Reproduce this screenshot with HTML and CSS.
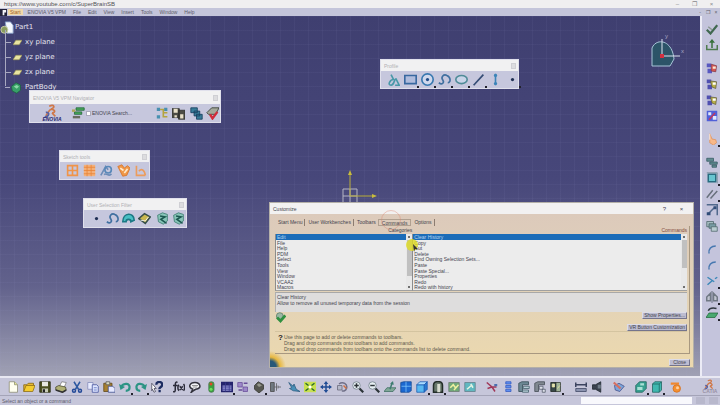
FILE: index.html
```
<!DOCTYPE html>
<html lang="en">
<head>
    <meta charset="UTF-8">
    <meta name="viewport" content="width=device-width, initial-scale=1.0">
    <title>Part1</title>
    <link rel="stylesheet" href="styles.css">
</head>
<body>

    <!-- icon set -->
    <svg class="sprite" aria-hidden="true">
        <symbol id="i-new" viewBox="0 0 16 16"><path d="M3 1h7l4 4v10H3z" fill="#fffff0" stroke="#8a8a70"/><path d="M10 1v4h4" fill="#e8e890" stroke="#8a8a70"/></symbol>
        <symbol id="i-open" viewBox="0 0 16 16"><path d="M1 14V5h4l2-2h7v3" fill="#e8b830" stroke="#80600c"/><path d="M1 14l3-8h12l-3 8z" fill="#f4cc30" stroke="#8a6a10"/></symbol>
        <symbol id="i-save" viewBox="0 0 16 16"><path d="M1 1h14v14H1z" fill="#4c5020" stroke="#22240c"/><path d="M4 1h8v6H4z" fill="#e8e8e0"/><path d="M4 10h8v5H4z" fill="#c8ccb8"/><path d="M5 11h3v4H5z" fill="#222"/></symbol>
        <symbol id="i-print" viewBox="0 0 16 16"><path d="M6 7l3-6 6 1-3 7z" fill="#fff" stroke="#777"/><path d="M1 8l4-2 9 2 1 4-5 3-9-3z" fill="#b0b074" stroke="#44442c"/><path d="M1 12l9 3 5-3" fill="none" stroke="#333" stroke-width="2"/></symbol>
        <symbol id="i-cut" viewBox="0 0 16 16"><path d="M4 1l6 10M12 1L6 11" stroke="#2c58a0" stroke-width="2" fill="none"/><circle cx="4" cy="13" r="2" fill="none" stroke="#234a98" stroke-width="2"/><circle cx="12" cy="13" r="2" fill="none" stroke="#234a98" stroke-width="2"/></symbol>
        <symbol id="i-copy" viewBox="0 0 16 16"><path d="M1 2h7v9H1z" fill="#e8ecff" stroke="#8088b8"/><path d="M7 5h6l2 2v8H7z" fill="#dfe6ff" stroke="#3c4c98"/><path d="M9 9h4M9 12h4" stroke="#5068b8"/></symbol>
        <symbol id="i-paste" viewBox="0 0 16 16"><path d="M1 3h11v11H1z" fill="#a88030" stroke="#5c4414"/><path d="M4 1h5v4H4z" fill="#d8d8c0" stroke="#555"/><path d="M7 7h6l3 3v5H7z" fill="#e6e9ff" stroke="#384888"/></symbol>
        <symbol id="i-undo" viewBox="0 0 16 16"><path d="M3 7c4-5 12-4 11 2 0 3-3 4-5 4" fill="none" stroke="#2c9484" stroke-width="3"/><path d="M0 4l2 8 6-4z" fill="#2c9484"/></symbol>
        <symbol id="i-redo" viewBox="0 0 16 16"><path d="M13 7C9 2 1 3 2 9c0 3 3 4 5 4" fill="none" stroke="#2c9484" stroke-width="3"/><path d="M16 4l-2 8-6-4z" fill="#2c9484"/></symbol>
        <symbol id="i-what" viewBox="0 0 16 16"><path d="M1 3l6 7H4l2 4-2 1-2-4-1 2z" fill="#fff" stroke="#445"/><path d="M7 5c0-5 8-5 8 0 0 3-4 3-4 6" fill="none" stroke="#1c2c60" stroke-width="3"/><path d="M10 12h3v3h-3z" fill="#1c2c60"/></symbol>
        <symbol id="i-fx" viewBox="0 0 16 16"><path d="M6 2C3 0 3 4 3 7v5c0 2-1 3-3 2M0 6h6M8 5c-2 2-2 6 0 8M9 7l4 5M13 7l-4 5M14 4c2 2 2 7 0 9" fill="none" stroke="#2a2a38" stroke-width="2"/></symbol>
        <symbol id="i-note" viewBox="0 0 16 16"><path d="M3 15l2-4C-2 8 1 2 8 2s10 8 1 9c-2 1-4 3-6 4z" fill="#f4f4f8" stroke="#33333d" stroke-width="2"/><path d="M4 6h8M5 8h6" stroke="#777"/></symbol>
        <symbol id="i-light" viewBox="0 0 16 16"><rect x="5" y="1" width="7" height="14" rx="3" fill="#38a040" stroke="#4c7850"/><circle cx="8" cy="4" r="2" fill="#e04828"/><circle cx="8" cy="11" r="2" fill="#70e060"/></symbol>
        <symbol id="i-table" viewBox="0 0 16 16"><path d="M1 2h14v12H1z" fill="#9090d0" stroke="#24246c" stroke-width="2"/><path d="M1 4h14" stroke="#24246c" stroke-width="4"/><path d="M1 8h14M1 11h14M6 2v12M11 2v12" stroke="#38388c"/></symbol>
        <symbol id="i-know" viewBox="0 0 16 16"><path d="M1 2h6v6H1zM8 8h6v6H8z" fill="#9c88c8" stroke="#684c98"/><path d="M9 3h5M2 12h5" stroke="#684c98" stroke-width="2"/></symbol>
        <symbol id="i-rock" viewBox="0 0 16 16"><path d="M2 6l5-5 7 4v6l-6 5-6-5z" fill="#55564f" stroke="#33342e"/><path d="M5 5l3-2 4 3-4 2z" fill="#94968a"/></symbol>
        <symbol id="i-tree" viewBox="0 0 16 16"><path d="M2 2h5v12H2z" fill="#707880" stroke="#444"/><path d="M7 8h3M10 3v10M12 8h4M12 6v4" stroke="#555" fill="none"/></symbol>
        <symbol id="i-fly" viewBox="0 0 16 16"><path d="M1 2l6 5 1-3 3 7 5 3-9-1-5-3 3-1z" fill="#4a90b8" stroke="#28587c"/></symbol>
        <symbol id="i-fit" viewBox="0 0 16 16"><path d="M0 1h16v14H0z" fill="#c8e050"/><path d="M2 3l4 3M14 3l-4 3M2 13l4-3M14 13l-4-3" stroke="#2c6c2c" stroke-width="2"/><circle cx="8" cy="8" r="2" fill="#fff"/></symbol>
        <symbol id="i-pan" viewBox="0 0 16 16"><path d="M8 2v12M2 8h12" stroke="#204c94" stroke-width="2"/><path d="M8 0l3 4H5zM8 16l3-4H5zM0 8l4-3v6zM16 8l-4-3v6z" fill="#204c94"/></symbol>
        <symbol id="i-rotate" viewBox="0 0 16 16"><path d="M2 6h6v6H2z" fill="#b4b8c8" stroke="#667"/><path d="M4 4c5-4 12 0 10 6-1 3-4 4-6 3" fill="none" stroke="#707088" stroke-width="2"/><path d="M10 6l4 4" stroke="#d07040" stroke-width="2"/></symbol>
        <symbol id="i-zoomin" viewBox="0 0 16 16"><circle cx="6" cy="6" r="5" fill="#e8f0f4" stroke="#6c7c84"/><path d="M10 10l5 5" stroke="#2c3438" stroke-width="3"/><path d="M6 3v6M3 6h6" stroke="#2c3438" stroke-width="2"/></symbol>
        <symbol id="i-zoomout" viewBox="0 0 16 16"><circle cx="6" cy="6" r="5" fill="#e8f0f4" stroke="#6c7c84"/><path d="M10 10l5 5" stroke="#2c3438" stroke-width="3"/><path d="M3 6h6" stroke="#2c3438" stroke-width="2"/></symbol>
        <symbol id="i-normal" viewBox="0 0 16 16"><path d="M0 14l4-5h12l-4 5z" fill="#80a898" stroke="#3c6c60"/><path d="M8 11L11 2" stroke="#3c7c70" stroke-width="2"/><path d="M8 4l4-4 1 5z" fill="#3c7c70"/></symbol>
        <symbol id="i-multi" viewBox="0 0 16 16"><path d="M1 2l4-1h10v12l-3 2H1z" fill="#1c68d0" stroke="#134890"/><path d="M2 7h13M8 1v14" stroke="#80c8ff"/></symbol>
        <symbol id="i-cube" viewBox="0 0 16 16"><path d="M1 5h10v10H1z" fill="#58b8f0" stroke="#1858b0"/><path d="M1 5l4-4h10l-4 4z" fill="#a8dcff" stroke="#1858b0"/><path d="M11 5l4-4v10l-4 4z" fill="#2878d0" stroke="#1858b0"/></symbol>
        <symbol id="i-shade" viewBox="0 0 16 16"><path d="M2 15V6c0-7 12-7 12 0v9z" fill="#68786c" stroke="#222c28" stroke-width="2"/><path d="M7 4h4v11H7z" fill="#d8dcd0"/></symbol>
        <symbol id="i-hide" viewBox="0 0 16 16"><path d="M1 2h14v12H1z" fill="#70a878" stroke="#6c7870"/><path d="M3 9l4-4 3 4M8 12l6-7" fill="none" stroke="#f0f0a0" stroke-width="2"/></symbol>
        <symbol id="i-swap" viewBox="0 0 16 16"><path d="M1 2h14v12H1z" fill="#60b8c0" stroke="#607c88"/><path d="M4 11l7-6M9 4l3 5" fill="none" stroke="#e4f4e4" stroke-width="2"/></symbol>
        <symbol id="i-axis" viewBox="0 0 16 16"><path d="M1 2l7 6-6 2M8 8h6M8 8l4 6" fill="none" stroke="#a03858" stroke-width="2"/><path d="M11 4h4v3h-4z" fill="#4c70b0"/></symbol>
        <symbol id="i-stack" viewBox="0 0 16 16"><path d="M5 1h7v3H5zM5 6h7v3H5zM5 11h7v3H5z" fill="#6090f0" stroke="#3058c0"/></symbol>
        <symbol id="i-cat" viewBox="0 0 16 16"><path d="M1 3l4-2h9v4H6v9H1z" fill="#6c8894" stroke="#304850"/><path d="M7 7h8v3H7zM6 12h8v3H6z" fill="#b4ccd4" stroke="#405c68"/></symbol>
        <symbol id="i-cat2" viewBox="0 0 16 16"><path d="M1 3l4-2h9v4H6v9H1z" fill="#808890" stroke="#404850"/><path d="M7 7h5v4H7zM11 11h4v4h-4z" fill="#dce0e8" stroke="#505868"/></symbol>
        <symbol id="i-book" viewBox="0 0 16 16"><path d="M1 2h7v12H1z" fill="#384848" stroke="#18201c"/><path d="M8 2h6v12H8z" fill="#a0b498" stroke="#303830"/><path d="M3 4h3v4H3zM10 10l3-4" fill="#e0e0c0" stroke="#eee8a0"/></symbol>
        <symbol id="i-measure" viewBox="0 0 16 16"><path d="M1 10h14v4H1z" fill="#8c94b0" stroke="#3c4460"/><path d="M1 2v6M15 2v6M2 5h12" stroke="#3c4460" stroke-width="2"/></symbol>
        <symbol id="i-inertia" viewBox="0 0 16 16"><path d="M2 5h4l7-4v14l-7-4H2z" fill="#3c4450" stroke="#1c242c"/><path d="M9 5h4v5H9z" fill="#707c88"/></symbol>
        <symbol id="i-paint" viewBox="0 0 16 16"><path d="M2 6l6-3 7 4-6 7-6-2z" fill="#7ca4d8" stroke="#404c88"/><path d="M1 2l9 8" stroke="#d87060" stroke-width="3"/></symbol>
        <symbol id="i-mat" viewBox="0 0 16 16"><path d="M1 6l5-5h9v9l-5 5H1z" fill="#38a090" stroke="#1c6058"/><path d="M3 8h7v4H3zM7 3h5v3H7z" fill="#a8e0d4"/></symbol>
        <symbol id="i-box" viewBox="0 0 16 16"><path d="M2 4l3-3h9v11l-3 3H2z" fill="#40b8b0" stroke="#1c605c"/><path d="M11 4v11M2 4h9l3-3" stroke="#1c605c" fill="none"/></symbol>
        <symbol id="i-scene" viewBox="0 0 16 16"><path d="M1 2h11v3H1z" fill="#f08830"/><circle cx="9" cy="10" r="5" fill="#f49030" stroke="#d46c18"/><circle cx="10" cy="9" r="2" fill="#ffd0a0"/></symbol>
        <symbol id="i-ds" viewBox="0 0 32 32"><path d="M11 4c9-4 11 2 4 5M14 9c-4 3-6 8-9 12M14 9c8 1 9 6 2 7M16 16l6 6" fill="none" stroke="#d07848" stroke-width="3"/><path d="M5 15c8-1 6 8-2 8" fill="none" stroke="#5860a0" stroke-width="3"/></symbol>

        <symbol id="i-exit" viewBox="0 0 16 16"><path d="M1 9l5 5 9-11" fill="none" stroke="#406850" stroke-width="3"/><path d="M3 5l5 4" stroke="#8a9890" stroke-width="2"/></symbol>
        <symbol id="i-up" viewBox="0 0 16 16"><path d="M1 8v6h14V8" fill="none" stroke="#507c50" stroke-width="2"/><path d="M8 12V4" stroke="#38703c" stroke-width="2"/><path d="M8 0l4 5H4z" fill="#38703c"/></symbol>
        <symbol id="i-cons" viewBox="0 0 16 16"><path d="M1 2h6v5H1zM2 9h6v6H2z" fill="#5858c0"/><path d="M7 3l7 2-1 8-6-1z" fill="#d85850" stroke="#803848"/><path d="M9 6h4v3H9z" fill="#f8e8d8"/></symbol>
        <symbol id="i-cons2" viewBox="0 0 16 16"><path d="M1 2h6v5H1zM2 9h6v6H2z" fill="#5050b0"/><path d="M6 4l8 1-1 9-5-2z" fill="#b8b048" stroke="#605c38"/><path d="M9 6h4v3H9z" fill="#fff"/></symbol>
        <symbol id="i-cons3" viewBox="0 0 16 16"><path d="M1 1h14v14H1z" fill="#5060d8"/><path d="M3 3h4v4H3zM9 8h5v5H9z" fill="#e0e8ff"/><path d="M4 13l8-9" stroke="#c03860" stroke-width="2"/></symbol>
        <symbol id="i-hand" viewBox="0 0 16 16"><path d="M5 1l3 7 5 1 1 4-4 3-5-3z" fill="#f8b888" stroke="#e09058"/><path d="M5 1v8" stroke="#fff"/></symbol>
        <symbol id="i-corner" viewBox="0 0 16 16"><path d="M1 3h9v4H1zM5 8h10v3H5zM8 12h6v3H8z" fill="#608c90" stroke="#345860"/></symbol>
        <symbol id="i-square" viewBox="0 0 16 16"><path d="M3 3h10v10H3z" fill="#68c4d0" stroke="#286c80" stroke-width="2"/><path d="M1 1h14v14" fill="none" stroke="#6c8890"/></symbol>
        <symbol id="i-par" viewBox="0 0 16 16"><path d="M1 13L9 3M6 14l9-10" stroke="#68707c" stroke-width="2"/></symbol>
        <symbol id="i-chamfer" viewBox="0 0 16 16"><path d="M1 1h14v14M2 14l9-9" fill="none" stroke="#50688c" stroke-width="2"/><path d="M1 11h5v4H1zM10 3h4v4h-4z" fill="#304c78"/></symbol>
        <symbol id="i-layers" viewBox="0 0 16 16"><path d="M1 2h9v7H1z" fill="#a4bcc0" stroke="#4c6468"/><path d="M4 5h9v6H4z" fill="#789ca4" stroke="#4c6468"/><path d="M7 9h8v6H7z" fill="#b8ccd0" stroke="#4c6468"/></symbol>
        <symbol id="i-arc" viewBox="0 0 16 16"><path d="M4 14c-1-6 3-10 9-10" fill="none" stroke="#4878b0" stroke-width="2"/></symbol>
        <symbol id="i-trim" viewBox="0 0 16 16"><path d="M2 3l9 6M2 13l7-6M12 5l3-2" fill="none" stroke="#3c88b8" stroke-width="2"/></symbol>
        <symbol id="i-mirror" viewBox="0 0 16 16"><path d="M8 0v16" stroke="#505c6c"/><path d="M6 3L1 8v5h5zM10 3l5 5v5h-5z" fill="#c0c4d0" stroke="#707884" stroke-width="2"/></symbol>
        <symbol id="i-project" viewBox="0 0 16 16"><path d="M3 5c2-4 7-4 11-3" fill="none" stroke="#303840" stroke-width="2"/><path d="M0 14l4-6h12l-4 6z" fill="#48a870" stroke="#20683c"/></symbol>

        <symbol id="i-profile" viewBox="0 0 16 16"><path d="M5 2l3 6c-4 0-8 7-3 7 4 0 4-8 6-8l4 8h-5" fill="none" stroke="#4898a8" stroke-width="2"/></symbol>
        <symbol id="i-rect" viewBox="0 0 16 16"><path d="M1 3h14v10H1z" fill="#b0bcdc" stroke="#3868a0" stroke-width="2"/></symbol>
        <symbol id="i-circle" viewBox="0 0 16 16"><circle cx="8" cy="8" r="7" fill="#d0d8ec" stroke="#3878b0" stroke-width="2"/><circle cx="8" cy="8" r="2" fill="#204c88"/></symbol>
        <symbol id="i-spline" viewBox="0 0 16 16"><path d="M1 12c4 3 7 0 5-3-3-4 1-8 5-6 5 2 5 9 1 9" fill="none" stroke="#4070a0" stroke-width="2"/></symbol>
        <symbol id="i-ellipse" viewBox="0 0 16 16"><ellipse cx="8" cy="8" rx="7" ry="5" fill="#c8d4e8" stroke="#508c98" stroke-width="2"/></symbol>
        <symbol id="i-line" viewBox="0 0 16 16"><path d="M2 15L14 2" stroke="#344c74" stroke-width="2"/></symbol>
        <symbol id="i-axisline" viewBox="0 0 16 16"><path d="M8 1v14" stroke="#3c84b8" stroke-width="2"/><circle cx="8" cy="3" r="2" fill="#3c84b8"/><circle cx="8" cy="13" r="2" fill="#3c84b8"/></symbol>
        <symbol id="i-point" viewBox="0 0 16 16"><circle cx="8" cy="8" r="2" fill="#203054"/></symbol>
        <symbol id="i-grid" viewBox="0 0 16 16"><path d="M2 1v14M8 1v14M14 1v14M1 2h14M1 8h14M1 14h14" stroke="#f09448" stroke-width="2"/></symbol>
        <symbol id="i-snap" viewBox="0 0 16 16"><path d="M1 1h14v14H1z" fill="#f4b078"/><path d="M1 4h14M1 8h14M1 12h14M5 1v14M10 1v14" stroke="#e88438"/></symbol>
        <symbol id="i-constr" viewBox="0 0 16 16"><path d="M1 14L7 3l3 4" fill="none" stroke="#6c8cb8" stroke-width="2"/><circle cx="10" cy="7" r="4" fill="none" stroke="#5888b8" stroke-width="2"/><path d="M5 13c3-3 6 4 9-1" fill="none" stroke="#6c8cb8" stroke-width="2"/></symbol>
        <symbol id="i-geo" viewBox="0 0 16 16"><path d="M1 3l5-2 3 4 4-3 3 3-4 9-5 1z" fill="#f09848" stroke="#d87428"/><path d="M4 5l4 3M9 11l4-5" stroke="#ffe8c8" stroke-width="2"/></symbol>
        <symbol id="i-dim" viewBox="0 0 16 16"><path d="M3 2v12h11M6 9c3-4 7-2 8 5" fill="none" stroke="#ec9c5c" stroke-width="2"/></symbol>
        <symbol id="i-surf" viewBox="0 0 16 16"><path d="M1 12C1 0 15 0 15 10l-4 2c0-4-6-4-6 0z" fill="#48c0c4" stroke="#1c7884" stroke-width="2"/></symbol>
        <symbol id="i-vol" viewBox="0 0 16 16"><path d="M1 8l7-6 7 4-6 8z" fill="#c8b850" stroke="#38504c" stroke-width="2"/><path d="M3 10l6 1 4-5" stroke="#fff" fill="none"/></symbol>
        <symbol id="i-sel" viewBox="0 0 16 16"><path d="M2 4l6-3 6 2v8l-5 4-6-3z" fill="#88c4b8" stroke="#3c7c70"/><path d="M5 5l6 1-5 3 7 5" fill="none" stroke="#1c5850" stroke-width="2"/></symbol>
        <symbol id="i-server" viewBox="0 0 16 16"><path d="M5 1h10v3H5zM3 6h9v3H3z" fill="#48a858" stroke="#24683c"/><path d="M1 11h9v3H1z" fill="#686c60"/><path d="M0 3h4v3H0z" fill="#b0a858"/></symbol>
        <symbol id="i-search" viewBox="0 0 16 16"><path d="M1 1h4v4H1zM1 10h4v4H1zM10 1h4v4h-4z" fill="#4890b0"/><path d="M5 3h4v9h5M9 7h5" fill="none" stroke="#b4a440" stroke-width="2"/></symbol>
        <symbol id="i-disks" viewBox="0 0 16 16"><path d="M0 2h9v11H0zM8 4h8v11H8z" fill="#4c4c44" stroke="#30302c"/><path d="M2 2h5v5H2zM10 9h4v5h-4zM3 10h3v3H3z" fill="#e8e0c8"/></symbol>
        <symbol id="i-shift" viewBox="0 0 16 16"><path d="M1 1h8v6H1zM5 5h7v6H5zM8 9h7v6H8z" fill="#387c98" stroke="#143c5c"/></symbol>
        <symbol id="i-valid" viewBox="0 0 16 16"><path d="M1 7l6-6h9l-4 8H3z" fill="#a4a89c" stroke="#30382c"/><path d="M5 9l3 5 6-8" fill="none" stroke="#d02c3c" stroke-width="3"/></symbol>
        <symbol id="i-eraser" viewBox="0 0 16 16"><circle cx="7" cy="6" r="5" fill="#9cb8a4" stroke="#507060"/><path d="M3 8l5 5 7-8" fill="none" stroke="#309040" stroke-width="4"/></symbol>
        <symbol id="i-plane" viewBox="0 0 16 16"><path d="M0 12l5-8h11l-5 8z" fill="#e8e4a0" stroke="#98904c"/></symbol>
    </svg>

    <header>
        <div class="titlebar">
            <a href="https://www.youtube.com/c/SuperBrainSB">https://www.youtube.com/c/SuperBrainSB</a>
            <div class="win-buttons">
                <button aria-label="Minimize">–</button>
                <button aria-label="Restore">❐</button>
                <button aria-label="Close">×</button>
            </div>
        </div>
        <nav class="menubar">
            <svg class="app-icon" viewBox="0 0 8 8"><path d="M0 0h8v8H0z" fill="#22223a"/><path d="M3 1h4v3H5v3H3z" fill="#f4f4fa"/></svg>
            <button class="start">Start</button>
            <button>ENOVIA V5 VPM</button>
            <button>File</button>
            <button>Edit</button>
            <button>View</button>
            <button>Insert</button>
            <button>Tools</button>
            <button>Window</button>
            <button>Help</button>
            <div class="doc-buttons">
                <button aria-label="Minimize document">-</button>
                <button aria-label="Restore document">❐</button>
                <button aria-label="Close document">×</button>
            </div>
        </nav>
    </header>

    <main>
        <section class="canvas">
            <ul class="tree">
                <li class="root"><svg viewBox="0 0 16 16"><path d="M6 1h6l3 4v9H8z" fill="#f4f8ff" stroke="#88a0c8"/><circle cx="5" cy="10" r="4" fill="#8a9c60" stroke="#d0d4b0"/></svg>Part1</li>
                <li><svg><use href="#i-plane"/></svg>xy plane</li>
                <li><svg><use href="#i-plane"/></svg>yz plane</li>
                <li><svg><use href="#i-plane"/></svg>zx plane</li>
                <li class="body"><svg viewBox="0 0 16 16"><path d="M2 6l6-5 6 3v7l-5 4-6-3z" fill="#38a068" stroke="#1c6040"/><path d="M5 6l4-2 3 2-3 3z" fill="#8cd8a8"/></svg>PartBody</li>
            </ul>

            <svg class="compass" viewBox="0 0 44 40">
                <path d="M5 34V16c4-10 20-9 22 11l-4 7z" fill="#2c5468" stroke="#a8c4d8"/>
                <path d="M15 7v17h18" fill="none" stroke="#dce4f0"/>
                <path d="M13 22h4v4h-4z" fill="#d03040"/>
                <text x="18" y="6">y</text>
                <text x="34" y="21">x</text>
            </svg>

            <svg class="origin" viewBox="0 0 40 36">
                <path d="M3 20h14v14H3zM3 27h14M10 20v14" fill="none" stroke="#b4b4c4"/>
                <path d="M10 27V5M10 27h22" fill="none" stroke="#b8ac38"/>
                <path d="M10 1l2 5H8zM37 27l-5-2v4z" fill="#c8bc3c"/>
            </svg>

            <div class="palette profile">
                <div class="palette-title">Profile<button aria-label="Close"></button></div>
                <div class="palette-tools">
                    <button class="tool" aria-label="Profile"><svg><use href="#i-profile"/></svg></button>
                    <button class="tool more" aria-label="Rectangle"><svg><use href="#i-rect"/></svg></button>
                    <button class="tool more" aria-label="Circle"><svg><use href="#i-circle"/></svg></button>
                    <button class="tool more" aria-label="Spline"><svg><use href="#i-spline"/></svg></button>
                    <button class="tool more" aria-label="Ellipse"><svg><use href="#i-ellipse"/></svg></button>
                    <button class="tool more" aria-label="Line"><svg><use href="#i-line"/></svg></button>
                    <button class="tool" aria-label="Axis"><svg><use href="#i-axisline"/></svg></button>
                    <button class="tool more" aria-label="Point"><svg><use href="#i-point"/></svg></button>
                </div>
            </div>

            <div class="palette navigator">
                <div class="palette-title">ENOVIA V5 VPM Navigator<button aria-label="Close"></button></div>
                <div class="palette-tools">
                    <button class="enovia"><svg><use href="#i-ds"/></svg><b>ENOVIA</b></button>
                    <button class="tool" aria-label="Connect"><svg><use href="#i-server"/></svg></button>
                    <label class="search"><input type="checkbox">ENOVIA Search...</label>
                    <button class="tool" aria-label="Search"><svg><use href="#i-search"/></svg></button>
                    <button class="tool" aria-label="Save"><svg><use href="#i-disks"/></svg></button>
                    <button class="tool apart" aria-label="Propagate"><svg><use href="#i-shift"/></svg></button>
                    <button class="tool" aria-label="Validate"><svg><use href="#i-valid"/></svg></button>
                </div>
            </div>

            <div class="palette sketch">
                <div class="palette-title">Sketch tools<button aria-label="Close"></button></div>
                <div class="palette-tools">
                    <button class="tool" aria-label="Grid"><svg><use href="#i-grid"/></svg></button>
                    <button class="tool" aria-label="Snap to Point"><svg><use href="#i-snap"/></svg></button>
                    <button class="tool" aria-label="Construction"><svg><use href="#i-constr"/></svg></button>
                    <button class="tool" aria-label="Geometrical Constraints"><svg><use href="#i-geo"/></svg></button>
                    <button class="tool" aria-label="Dimensional Constraints"><svg><use href="#i-dim"/></svg></button>
                </div>
            </div>

            <div class="palette filter">
                <div class="palette-title">User Selection Filter<button aria-label="Close"></button></div>
                <div class="palette-tools">
                    <button class="tool" aria-label="Point filter"><svg><use href="#i-point"/></svg></button>
                    <button class="tool" aria-label="Curve filter"><svg><use href="#i-spline"/></svg></button>
                    <button class="tool" aria-label="Surface filter"><svg><use href="#i-surf"/></svg></button>
                    <button class="tool" aria-label="Volume filter"><svg><use href="#i-vol"/></svg></button>
                    <button class="tool apart" aria-label="Feature filter"><svg><use href="#i-sel"/></svg></button>
                    <button class="tool" aria-label="Geometry filter"><svg><use href="#i-sel"/></svg></button>
                </div>
            </div>

            <div class="dialog" role="dialog" aria-label="Customize">
                <div class="dialog-title">
                    <span>Customize</span>
                    <button aria-label="Help">?</button>
                    <button aria-label="Close">×</button>
                </div>
                <div class="dialog-body">
                    <div class="tabs">
                        <button>Start Menu</button>
                        <button>User Workbenches</button>
                        <button class="last">Toolbars</button>
                        <button class="active">Commands</button>
                        <button>Options</button>
                    </div>
                    <div class="page">
                        <div class="lists">
                            <div class="list-col">
                                <h3 id="cat">Categories</h3>
                                <div class="list">
                                    <ul role="listbox" aria-labelledby="cat">
                                        <li class="selected" role="option">Edit</li>
                                        <li role="option">File</li>
                                        <li role="option">Help</li>
                                        <li role="option">PDM</li>
                                        <li role="option">Select</li>
                                        <li role="option">Tools</li>
                                        <li role="option">View</li>
                                        <li role="option">Window</li>
                                        <li role="option">VCAA2</li>
                                        <li role="option">Macros</li>
                                    </ul>
                                    <div class="scroll tall"><i></i></div>
                                </div>
                            </div>
                            <div class="list-col wide">
                                <h3 id="com">Commands</h3>
                                <div class="list">
                                    <ul role="listbox" aria-labelledby="com">
                                        <li class="selected" role="option">Clear History</li>
                                        <li role="option">Copy</li>
                                        <li role="option">Cut</li>
                                        <li role="option">Delete</li>
                                        <li role="option">Find Owning Selection Sets...</li>
                                        <li role="option">Paste</li>
                                        <li role="option">Paste Special...</li>
                                        <li role="option">Properties</li>
                                        <li role="option">Redo</li>
                                        <li role="option">Redo with history</li>
                                    </ul>
                                    <div class="scroll"><i></i></div>
                                </div>
                            </div>
                        </div>
                        <div class="description">
                            <p>Clear History</p>
                            <p>Allow to remove all unused temporary data from the session</p>
                        </div>
                        <div class="actions">
                            <svg class="command-icon"><use href="#i-eraser"/></svg>
                            <div class="action-buttons">
                                <button class="push">Show Properties...</button>
                                <button class="push">VR Button Customization</button>
                            </div>
                        </div>
                        <div class="hint">
                            <b>?</b>
                            <div>
                                <p>Use this page to add or delete commands to toolbars.</p>
                                <p>Drag and drop commands onto toolbars to add commands.</p>
                                <p>Drag and drop commands from toolbars onto the commands list to delete command.</p>
                            </div>
                        </div>
                    </div>
                    <div class="dialog-footer">
                        <button class="push">Close</button>
                    </div>
                </div>
                <div class="click-ring"></div>
                <svg class="cursor" viewBox="0 0 14 14"><circle cx="7" cy="7" r="6" fill="#e0dc20" opacity=".8"/><path d="M8 6l5 5-3 0-1 3z" fill="#333"/></svg>
            </div>
        </section>

        <aside class="sidebar">
            <div class="group">
                <button class="tool" aria-label="Sketcher"><svg><use href="#i-exit"/></svg></button>
                <button class="tool" aria-label="Exit workbench"><svg><use href="#i-up"/></svg></button>
            </div>
            <div class="group">
                <button class="tool" aria-label="Constraint dialog"><svg><use href="#i-cons"/></svg></button>
                <button class="tool" aria-label="Constraint"><svg><use href="#i-cons2"/></svg></button>
                <button class="tool" aria-label="Fix together"><svg><use href="#i-cons2"/></svg></button>
                <button class="tool" aria-label="Animate"><svg><use href="#i-cons3"/></svg></button>
            </div>
            <div class="group">
                <button class="tool more" aria-label="Select"><svg><use href="#i-hand"/></svg></button>
            </div>
            <div class="group">
                <button class="tool" aria-label="Visualization"><svg><use href="#i-corner"/></svg></button>
                <button class="tool more" aria-label="Cut part"><svg><use href="#i-square"/></svg></button>
                <button class="tool more" aria-label="Parallel"><svg><use href="#i-par"/></svg></button>
                <button class="tool" aria-label="Constraint edit"><svg><use href="#i-chamfer"/></svg></button>
                <button class="tool" aria-label="Offset"><svg><use href="#i-layers"/></svg></button>
            </div>
            <div class="group">
                <button class="tool" aria-label="Corner"><svg><use href="#i-arc"/></svg></button>
                <button class="tool" aria-label="Chamfer"><svg><use href="#i-arc"/></svg></button>
                <button class="tool more" aria-label="Trim"><svg><use href="#i-trim"/></svg></button>
                <button class="tool more" aria-label="Mirror"><svg><use href="#i-mirror"/></svg></button>
                <button class="tool more" aria-label="Project"><svg><use href="#i-project"/></svg></button>
            </div>
        </aside>
    </main>

    <footer>
        <div class="toolbar">
            <div class="group">
                <button class="tool" aria-label="New"><svg><use href="#i-new"/></svg></button>
                <button class="tool" aria-label="Open"><svg><use href="#i-open"/></svg></button>
                <button class="tool" aria-label="Save"><svg><use href="#i-save"/></svg></button>
                <button class="tool" aria-label="Print"><svg><use href="#i-print"/></svg></button>
                <button class="tool" aria-label="Cut"><svg><use href="#i-cut"/></svg></button>
                <button class="tool" aria-label="Copy"><svg><use href="#i-copy"/></svg></button>
                <button class="tool" aria-label="Paste"><svg><use href="#i-paste"/></svg></button>
                <button class="tool more" aria-label="Undo"><svg><use href="#i-undo"/></svg></button>
                <button class="tool more" aria-label="Redo"><svg><use href="#i-redo"/></svg></button>
                <button class="tool" aria-label="What's this"><svg><use href="#i-what"/></svg></button>
            </div>
            <div class="group">
                <button class="tool" aria-label="Formula"><svg><use href="#i-fx"/></svg></button>
                <button class="tool" aria-label="Comment"><svg><use href="#i-note"/></svg></button>
                <button class="tool" aria-label="Check"><svg><use href="#i-light"/></svg></button>
                <button class="tool more" aria-label="Design table"><svg><use href="#i-table"/></svg></button>
                <button class="tool" aria-label="Knowledge"><svg><use href="#i-know"/></svg></button>
                <button class="tool more" aria-label="Law"><svg><use href="#i-rock"/></svg></button>
                <button class="tool" aria-label="Equivalent dimensions"><svg><use href="#i-tree"/></svg></button>
            </div>
            <div class="group near">
                <button class="tool" aria-label="Fly mode"><svg><use href="#i-fly"/></svg></button>
                <button class="tool" aria-label="Fit all in"><svg><use href="#i-fit"/></svg></button>
                <button class="tool" aria-label="Pan"><svg><use href="#i-pan"/></svg></button>
                <button class="tool" aria-label="Rotate"><svg><use href="#i-rotate"/></svg></button>
                <button class="tool" aria-label="Zoom in"><svg><use href="#i-zoomin"/></svg></button>
                <button class="tool" aria-label="Zoom out"><svg><use href="#i-zoomout"/></svg></button>
                <button class="tool" aria-label="Normal view"><svg><use href="#i-normal"/></svg></button>
                <button class="tool" aria-label="Multi view"><svg><use href="#i-multi"/></svg></button>
                <button class="tool more" aria-label="Isometric view"><svg><use href="#i-cube"/></svg></button>
                <button class="tool more" aria-label="Shading"><svg><use href="#i-shade"/></svg></button>
                <button class="tool" aria-label="Hide/Show"><svg><use href="#i-hide"/></svg></button>
                <button class="tool" aria-label="Swap visible space"><svg><use href="#i-swap"/></svg></button>
            </div>
            <div class="group">
                <button class="tool" aria-label="Axis system"><svg><use href="#i-axis"/></svg></button>
                <button class="tool" aria-label="Mean dimensions"><svg><use href="#i-stack"/></svg></button>
                <button class="tool" aria-label="Catalog"><svg><use href="#i-cat"/></svg></button>
                <button class="tool" aria-label="Catalog browser"><svg><use href="#i-cat2"/></svg></button>
                <button class="tool more" aria-label="Work on support"><svg><use href="#i-book"/></svg></button>
            </div>
            <div class="group far">
                <button class="tool" aria-label="Measure between"><svg><use href="#i-measure"/></svg></button>
                <button class="tool" aria-label="Measure item"><svg><use href="#i-inertia"/></svg></button>
            </div>
            <div class="group">
                <button class="tool" aria-label="Apply material"><svg><use href="#i-paint"/></svg></button>
            </div>
            <div class="group">
                <button class="tool more" aria-label="Draft analysis"><svg><use href="#i-mat"/></svg></button>
                <button class="tool more" aria-label="Bounding box"><svg><use href="#i-box"/></svg></button>
            </div>
            <div class="group near">
                <button class="tool" aria-label="Scene"><svg><use href="#i-scene"/></svg></button>
            </div>
            <div class="brand"><svg><use href="#i-ds"/></svg><b>CATIA</b></div>
        </div>
        <div class="status">
            <label for="power">Select an object or a command</label>
            <input type="text" id="power">
            <button aria-label="Run"></button>
            <button aria-label="Options"></button>
        </div>
    </footer>

</body>
</html>
```
FILE: styles.css
```
* {
    box-sizing: border-box;
}
body {
    margin: 0;
    min-height: 100vh;
    display: flex;
    flex-direction: column;
    font-family: "Liberation Sans", Arial, sans-serif;
    font-size: 5px;
    line-height: 6px;
    color: #44444e;
    background-color: #c6c6da;
}
button {
    font: inherit;
    color: inherit;
    background: none;
    border: none;
    padding: 0;
    cursor: pointer;
}
ul, p, h3 {
    list-style: none;
    margin: 0;
    padding: 0;
}
.sprite {
    display: none;
}

/* title bar and menu */
.titlebar {
    display: flex;
    justify-content: space-between;
    align-items: center;
    height: 8px;
    padding-left: 4px;
    background-color: #f0eff0;
    font-size: 6px;
}
.titlebar a {
    color: #505056;
    text-decoration: none;
}
.win-buttons {
    display: flex;
    color: #88888c;
}
.win-buttons button {
    width: 17px;
}
.menubar {
    display: flex;
    align-items: center;
    height: 8px;
    gap: 7px;
    background-color: #c4c5da;
    color: #5c5c68;
}
.app-icon {
    width: 7px;
    height: 7px;
}
.menubar .start {
    padding: 0 2px;
    margin: 0 -2px 0 -6px;
    background-color: #f0d8a8;
    color: #a06028;
}
.doc-buttons {
    display: flex;
    margin-left: auto;
}
.doc-buttons button {
    width: 8px;
}

main {
    flex: 1;
    display: flex;
}

/* 3D view */
.canvas {
    position: relative;
    flex: 1;
    overflow: hidden;
    background-image:
        repeating-linear-gradient(90deg, rgba(170, 170, 220, 0.06) 0 1px, transparent 1px 14px),
        repeating-linear-gradient(rgba(170, 170, 220, 0.05) 0 1px, transparent 1px 14px),
        linear-gradient(#3f3f70, #47477a 45%, #62628c 75%, #a0a1b4);
}
.tree {
    position: relative;
    width: 80px;
    padding: 4px 0 0 5px;
    font-family: "DejaVu Sans", sans-serif;
    font-size: 7px;
    line-height: 15px;
    color: #e4e4ee;
}
.tree::before {
    content: "";
    position: absolute;
    left: 5px;
    top: 14px;
    width: 1px;
    height: 56px;
    background-color: #a8a8c0;
}
.tree li {
    display: flex;
    align-items: center;
    height: 15px;
}
.tree li::before {
    content: "";
    width: 6px;
    height: 1px;
    margin-right: 2px;
    background-color: #a8a8c0;
}
.tree svg {
    width: 9px;
    height: 9px;
    margin-right: 3px;
}
.tree .root::before {
    display: none;
}
.tree .root svg {
    width: 14px;
    height: 14px;
    margin: 0 1px 0 -5px;
}
.tree .body::before {
    width: 5px;
    margin-right: 0;
}
.tree .body svg {
    width: 12px;
    height: 12px;
}
.compass {
    position: absolute;
    right: 9px;
    top: 16px;
    width: 44px;
    height: 40px;
}
.compass text {
    fill: #a8a8c4;
    font-size: 6px;
}
.origin {
    position: absolute;
    left: 340px;
    top: 153px;
    width: 40px;
    height: 36px;
}

/* floating toolbars */
.palette {
    position: absolute;
    background-color: #c6c7dd;
    border: 1px solid #e0e0ec;
}
.palette-title {
    display: flex;
    justify-content: space-between;
    align-items: center;
    height: 11px;
    padding: 0 2px 0 3px;
    background-color: #f1f1f2;
    color: #b0b0b4;
}
.palette-title button {
    width: 5px;
    height: 6px;
    background-color: #dcdcdf;
    border: 1px solid #cfcfd4;
}
.palette-tools {
    display: flex;
    align-items: center;
    height: 17px;
    padding-left: 4px;
}
.palette .tool svg {
    width: 13px;
    height: 13px;
}
.profile {
    left: 380px;
    top: 43px;
    width: 139px;
}
.profile .tool, .sketch .tool {
    width: 17px;
    flex: none;
}
.navigator {
    left: 29px;
    top: 74px;
    width: 192px;
}
.navigator .palette-title {
    height: 13px;
}
.navigator .palette-tools {
    height: 18px;
}
.sketch {
    left: 59px;
    top: 134px;
    width: 91px;
}
.filter {
    left: 83px;
    top: 182px;
    width: 104px;
}
.enovia {
    display: flex;
    flex-direction: column;
    align-items: center;
    width: 36px;
    color: #24246c;
    font-style: italic;
}
.enovia svg {
    width: 18px;
    height: 18px;
    margin-bottom: -6px;
}
.search {
    display: flex;
    align-items: center;
    gap: 1px;
    margin-right: auto;
}
.search input {
    appearance: none;
    width: 5px;
    height: 5px;
    margin: 0;
    background-color: #fff;
    border: 1px solid #aaaabc;
}
.apart {
    margin-left: 2px;
}

/* tool buttons */
.tool {
    position: relative;
    display: flex;
    align-items: center;
    justify-content: center;
    width: 16px;
    height: 16px;
}
.tool svg {
    width: 12px;
    height: 12px;
}
.more::after {
    content: "";
    position: absolute;
    right: 0;
    bottom: 0;
    width: 2px;
    height: 2px;
    background-color: #22222c;
}
.sidebar {
    display: flex;
    flex-direction: column;
    gap: 7px;
    width: 20px;
    padding: 5px 1px 0 2px;
    border-left: 2px solid #ececf6;
    background-color: #c4c4dc;
}

/* customize dialog */
.dialog {
    position: absolute;
    right: 6px;
    top: 186px;
    width: 425px;
    border: 1px solid #b4b0a8;
    background-color: #e8d8b8;
}
.dialog-title {
    display: flex;
    align-items: center;
    height: 11px;
    padding: 0 3px;
    background-color: #f2f1f1;
}
.dialog-title span {
    flex: 1;
}
.dialog-title button {
    width: 17px;
    font-size: 6px;
}
.dialog-body {
    padding: 4px 3px 1px 5px;
    background:
        radial-gradient(circle at 0 100%, #285878 0 6px, #e8b840 10px, transparent 16px),
        linear-gradient(#dccabb, #e2d2b8 50%, #ecd9ae);
}
.tabs {
    display: flex;
    align-items: center;
    height: 8px;
}
.tabs button {
    height: 7px;
    padding: 0 2px 0 3px;
    border-right: 1px solid #8c7c70;
}
.tabs .last {
    border: none;
}
.tabs .active {
    padding: 0 3px;
    border: 1px solid #b0a090;
}
.page {
    padding-right: 2px;
    border-right: 1px solid #a89880;
    border-bottom: 1px solid #a89880;
}
.lists {
    display: flex;
}
.list-col {
    flex: 1;
}
.wide {
    flex: 2;
}
.list-col h3 {
    height: 8px;
    font-size: 5px;
    font-weight: normal;
    line-height: 8px;
    text-align: right;
}
.wide h3 {
    color: #804838;
}
.list {
    display: flex;
    height: 57px;
    border-left: 1px solid #8c8c8c;
    border-bottom: 1px solid #a0a0a0;
    background-color: #ececec;
}
.list ul {
    flex: 1;
    display: grid;
    grid-template-rows: repeat(10, minmax(0, 1fr));
}
.list li {
    padding-left: 1px;
}
.selected {
    background-color: #1c6cb8;
    color: #b8d4f0;
}
.scroll {
    display: flex;
    flex-direction: column;
    align-items: center;
    justify-content: space-between;
    width: 6px;
    background-color: #e8e8e8;
}
.scroll::before, .scroll::after {
    content: "";
    width: 2px;
    height: 2px;
    margin: 2px 0;
    background-color: #707070;
}
.scroll i {
    width: 5px;
    height: 28px;
    margin-bottom: auto;
    background-color: #c0c0c0;
}
.tall i {
    height: 36px;
}
.description {
    height: 20px;
    margin-top: 1px;
    padding: 1px 0 0 1px;
    background-color: #dedddd;
    border-top: 1px solid #a8a8a8;
    border-left: 1px solid #b0b0b0;
}
.actions {
    display: flex;
    justify-content: space-between;
}
.command-icon {
    width: 11px;
    height: 11px;
}
.action-buttons {
    display: flex;
    flex-direction: column;
    align-items: flex-end;
    gap: 5px;
}
.push {
    height: 7px;
    padding: 0 3px;
    line-height: 5px;
    background-color: #bcbcd0;
    border: 1px solid;
    border-color: #dcdce8 #74748c #74748c #dcdce8;
}
.action-buttons .push {
    padding: 0 1px;
}
.hint {
    display: flex;
    align-items: flex-start;
    padding: 2px 2px 1px 3px;
    border-top: 1px solid #d4c4a0;
    color: #60584c;
}
.hint b {
    width: 6px;
    font-size: 8px;
    line-height: 8px;
    color: #222;
}
.dialog-footer {
    display: flex;
    justify-content: flex-end;
    padding-top: 5px;
}
.click-ring {
    position: absolute;
    left: 111px;
    top: 7px;
    width: 20px;
    height: 20px;
    border: 1px solid rgba(220, 130, 110, 0.4);
    border-radius: 50%;
}
.cursor {
    position: absolute;
    left: 135px;
    top: 35px;
    width: 14px;
    height: 14px;
}

/* bottom toolbar and status line */
.toolbar {
    display: flex;
    align-items: center;
    gap: 6px;
    height: 20px;
    padding-left: 5px;
    border-top: 2px solid #e8e8f2;
    border-bottom: 1px solid #a4a4b8;
    background-color: #c6c6da;
}
.toolbar .group {
    display: flex;
}
.toolbar .near {
    margin-left: -3px;
}
.toolbar .far {
    margin-left: 3px;
}
.brand {
    display: flex;
    flex-direction: column;
    align-items: center;
    margin-left: auto;
    width: 20px;
    color: #9890a4;
}
.brand svg {
    width: 14px;
    height: 14px;
    margin-bottom: -5px;
}
.status {
    display: flex;
    align-items: center;
    gap: 4px;
    height: 9px;
    padding: 0 2px;
}
.status label {
    flex: 1;
    color: #5c5c6c;
}
.status input {
    width: 111px;
    height: 7px;
    padding: 0;
    font: inherit;
    border: none;
    background-color: #f8f8fc;
}
.status button {
    width: 9px;
    height: 7px;
    background-color: #b8b8cc;
}
```
